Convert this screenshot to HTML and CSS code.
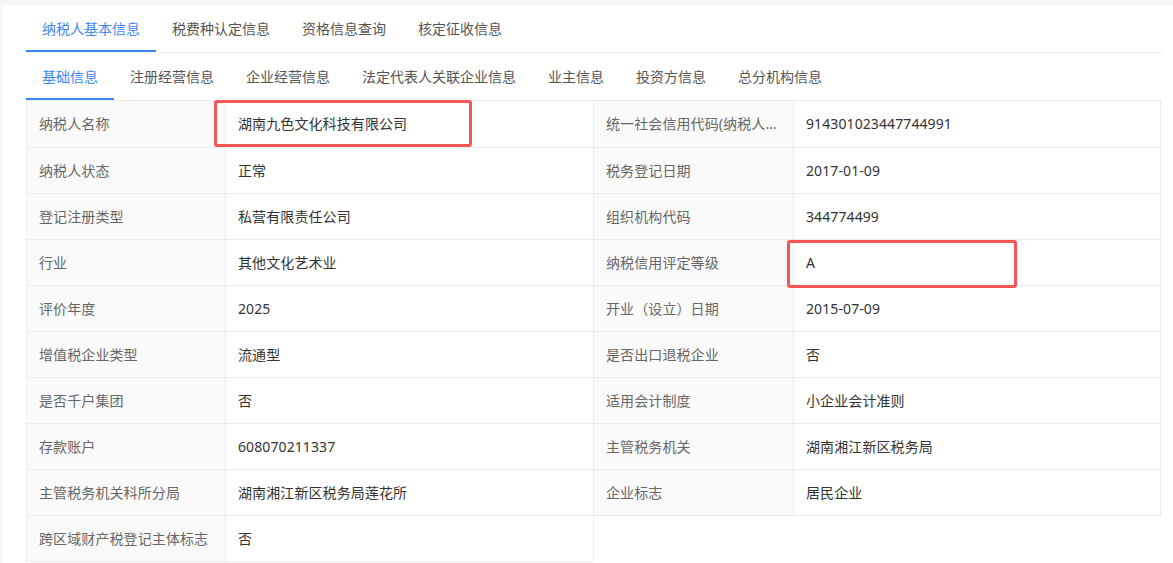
FILE: index.html
```html
<!DOCTYPE html>
<html lang="zh-CN">
<head>
    <meta charset="UTF-8">
    <title>纳税人基本信息</title>
    <link rel="stylesheet" href="styles.css">
</head>
<body>
    <div class="card">
        <div class="tabs main_tabs">
            <div class="tab active">纳税人基本信息</div>
            <div class="tab">税费种认定信息</div>
            <div class="tab">资格信息查询</div>
            <div class="tab">核定征收信息</div>
        </div>
        <div class="tabs sub_tabs">
            <div class="tab active">基础信息</div>
            <div class="tab">注册经营信息</div>
            <div class="tab">企业经营信息</div>
            <div class="tab">法定代表人关联企业信息</div>
            <div class="tab">业主信息</div>
            <div class="tab">投资方信息</div>
            <div class="tab">总分机构信息</div>
        </div>

        <div class="info_wrap">
            <div class="info_grid">
                <div class="cell label">纳税人名称</div>
                <div class="cell value">湖南九色文化科技有限公司</div>
                <div class="cell label" title="统一社会信用代码(纳税人识别号)">统一社会信用代码(纳税人识别号)</div>
                <div class="cell value">914301023447744991</div>

                <div class="cell label">纳税人状态</div>
                <div class="cell value">正常</div>
                <div class="cell label">税务登记日期</div>
                <div class="cell value">2017-01-09</div>

                <div class="cell label">登记注册类型</div>
                <div class="cell value">私营有限责任公司</div>
                <div class="cell label">组织机构代码</div>
                <div class="cell value">344774499</div>

                <div class="cell label">行业</div>
                <div class="cell value">其他文化艺术业</div>
                <div class="cell label">纳税信用评定等级</div>
                <div class="cell value">A</div>

                <div class="cell label">评价年度</div>
                <div class="cell value">2025</div>
                <div class="cell label">开业（设立）日期</div>
                <div class="cell value">2015-07-09</div>

                <div class="cell label">增值税企业类型</div>
                <div class="cell value">流通型</div>
                <div class="cell label">是否出口退税企业</div>
                <div class="cell value">否</div>

                <div class="cell label">是否千户集团</div>
                <div class="cell value">否</div>
                <div class="cell label">适用会计制度</div>
                <div class="cell value">小企业会计准则</div>

                <div class="cell label">存款账户</div>
                <div class="cell value">608070211337</div>
                <div class="cell label">主管税务机关</div>
                <div class="cell value">湖南湘江新区税务局</div>

                <div class="cell label">主管税务机关科所分局</div>
                <div class="cell value">湖南湘江新区税务局莲花所</div>
                <div class="cell label">企业标志</div>
                <div class="cell value">居民企业</div>

                <div class="cell label">跨区域财产税登记主体标志</div>
                <div class="cell value">否</div>
            </div>

            <!-- 标注框 -->
            <div class="mark mark_name"></div>
            <div class="mark mark_level"></div>
        </div>
    </div>
</body>
</html>
```

FILE: styles.css
```css
body {
    margin: 0;
    background-color: #f5f6f8;
    font-family: "Noto Sans", "Noto Sans CJK SC", sans-serif;
    font-size: 14px;
}
.card {
    margin: 5px 0 0 2px;
    padding: 3px 11px 0 24px;
    background-color: #fff;
    height: 555px;
    overflow: hidden;
}
.tabs {
    display: flex;
}
.main_tabs {
    border-bottom: 1px solid #eeeeee;
}
.sub_tabs {
    margin-top: 3px;
}
.tab {
    padding: 0 16px;
    height: 42px;
    line-height: 42px;
    color: #555;
    border-bottom: 2px solid transparent;
    white-space: nowrap;
}
.tab.active {
    color: #3d87f5;
    border-bottom-color: #3d87f5;
}
.info_wrap {
    position: relative;
}
.info_grid {
    display: grid;
    grid-template-columns: 200px 368px 200px 367px;
    grid-template-rows: 48px;
    grid-auto-rows: 46px;
}
.info_grid .cell {
    box-sizing: border-box;
    padding: 0 12px;
    line-height: 45px;
    border-right: 1px solid #ececec;
    border-bottom: 1px solid #ececec;
    white-space: nowrap;
    overflow: hidden;
    text-overflow: ellipsis;
    letter-spacing: 0.1px;
}
.info_grid .cell:nth-child(4n+1) {
    border-left: 1px solid #ececec;
}
.info_grid .cell:nth-child(-n+4) {
    border-top: 1px solid #ececec;
    line-height: 46px;
}
.cell.label {
    background-color: #fafafa;
    color: #666;
}
.cell.value {
    color: #333;
}
.mark {
    position: absolute;
    border: 3px solid #f75454;
    border-radius: 3px;
    box-sizing: border-box;
}
.mark_name {
    left: 188px;
    top: 0;
    width: 258px;
    height: 47px;
}
.mark_level {
    left: 761px;
    top: 140px;
    width: 230px;
    height: 48px;
}
```
